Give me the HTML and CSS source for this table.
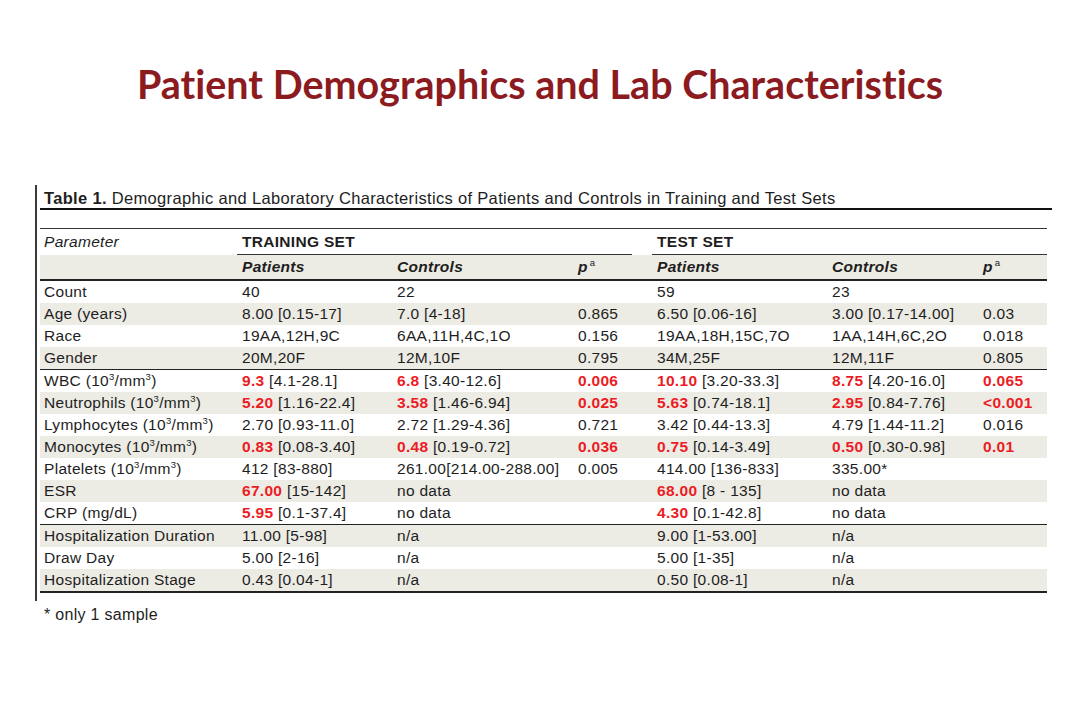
FILE: index.html
```html
<!DOCTYPE html>
<html>
<head>
<meta charset="utf-8">
<link rel="stylesheet" href="styles.css">
</head>
<body>
<div class="slide">
  <h1 class="title">Patient Demographics and Lab Characteristics</h1>
  <div class="figure">
    <div class="caption"><b>Table 1.</b> Demographic and Laboratory Characteristics of Patients and Controls in Training and Test Sets</div>
    <table class="data">
      <colgroup>
        <col class="c1"><col class="c2"><col class="c3"><col class="c4"><col class="cs"><col class="c5"><col class="c6"><col class="c7">
      </colgroup>
      <thead>
        <tr class="h1">
          <th class="param">Parameter</th>
          <th colspan="3" class="set">TRAINING SET</th>
          <th class="gap"></th>
          <th colspan="3" class="set">TEST SET</th>
        </tr>
        <tr class="h2">
          <th></th>
          <th>Patients</th><th>Controls</th><th>p<sup>a</sup></th>
          <th></th>
          <th>Patients</th><th>Controls</th><th>p<sup>a</sup></th>
        </tr>
      </thead>
      <tbody>
        <tr><td>Count</td><td>40</td><td>22</td><td></td><td></td><td>59</td><td>23</td><td></td></tr>
        <tr class="alt"><td>Age (years)</td><td>8.00 [0.15-17]</td><td>7.0 [4-18]</td><td>0.865</td><td></td><td>6.50 [0.06-16]</td><td>3.00 [0.17-14.00]</td><td>0.03</td></tr>
        <tr><td>Race</td><td>19AA,12H,9C</td><td>6AA,11H,4C,1O</td><td>0.156</td><td></td><td>19AA,18H,15C,7O</td><td>1AA,14H,6C,2O</td><td>0.018</td></tr>
        <tr class="alt sep"><td>Gender</td><td>20M,20F</td><td>12M,10F</td><td>0.795</td><td></td><td>34M,25F</td><td>12M,11F</td><td>0.805</td></tr>
        <tr><td>WBC (10<sup>3</sup>/mm<sup>3</sup>)</td><td><b class="r">9.3</b> [4.1-28.1]</td><td><b class="r">6.8</b> [3.40-12.6]</td><td><b class="r">0.006</b></td><td></td><td><b class="r">10.10</b> [3.20-33.3]</td><td><b class="r">8.75</b> [4.20-16.0]</td><td><b class="r">0.065</b></td></tr>
        <tr class="alt"><td>Neutrophils (10<sup>3</sup>/mm<sup>3</sup>)</td><td><b class="r">5.20</b> [1.16-22.4]</td><td><b class="r">3.58</b> [1.46-6.94]</td><td><b class="r">0.025</b></td><td></td><td><b class="r">5.63</b> [0.74-18.1]</td><td><b class="r">2.95</b> [0.84-7.76]</td><td><b class="r">&lt;0.001</b></td></tr>
        <tr><td>Lymphocytes (10<sup>3</sup>/mm<sup>3</sup>)</td><td>2.70 [0.93-11.0]</td><td>2.72 [1.29-4.36]</td><td>0.721</td><td></td><td>3.42 [0.44-13.3]</td><td>4.79 [1.44-11.2]</td><td>0.016</td></tr>
        <tr class="alt"><td>Monocytes (10<sup>3</sup>/mm<sup>3</sup>)</td><td><b class="r">0.83</b> [0.08-3.40]</td><td><b class="r">0.48</b> [0.19-0.72]</td><td><b class="r">0.036</b></td><td></td><td><b class="r">0.75</b> [0.14-3.49]</td><td><b class="r">0.50</b> [0.30-0.98]</td><td><b class="r">0.01</b></td></tr>
        <tr><td>Platelets (10<sup>3</sup>/mm<sup>3</sup>)</td><td>412 [83-880]</td><td>261.00[214.00-288.00]</td><td>0.005</td><td></td><td>414.00 [136-833]</td><td>335.00*</td><td></td></tr>
        <tr class="alt"><td>ESR</td><td><b class="r">67.00</b> [15-142]</td><td>no data</td><td></td><td></td><td><b class="r">68.00</b> [8 - 135]</td><td>no data</td><td></td></tr>
        <tr class="sep"><td>CRP (mg/dL)</td><td><b class="r">5.95</b> [0.1-37.4]</td><td>no data</td><td></td><td></td><td><b class="r">4.30</b> [0.1-42.8]</td><td>no data</td><td></td></tr>
        <tr class="alt"><td>Hospitalization Duration</td><td>11.00 [5-98]</td><td>n/a</td><td></td><td></td><td>9.00 [1-53.00]</td><td>n/a</td><td></td></tr>
        <tr><td>Draw Day</td><td>5.00 [2-16]</td><td>n/a</td><td></td><td></td><td>5.00 [1-35]</td><td>n/a</td><td></td></tr>
        <tr class="alt last"><td>Hospitalization Stage</td><td>0.43 [0.04-1]</td><td>n/a</td><td></td><td></td><td>0.50 [0.08-1]</td><td>n/a</td><td></td></tr>
      </tbody>
    </table>
  </div>
  <div class="footnote">* only 1 sample</div>
</div>
</body>
</html>
```
FILE: styles.css
```css
html, body {
  margin: 0;
  padding: 0;
  background: #ffffff;
}

.slide {
  width: 1080px;
  height: 720px;
  overflow: hidden;
  font-family: "Liberation Sans", Arial, sans-serif;
  color: #1e1e1e;
}

.title {
  margin: 0;
  padding-top: 61px;
  line-height: 46px;
  text-align: center;
  font-family: Lato, "Open Sans", sans-serif;
  font-weight: 700;
  font-size: 39.5px;
  font-variant-ligatures: none;
  color: #8c1b1f;
}

.figure {
  margin: 78px 0 0 35px;
  width: 1012px;
  border-left: 2px solid #3a3a3a;
  padding: 0 0 8px 3px;
}

.caption {
  font-size: 16.5px;
  letter-spacing: 0.33px;
  line-height: 20px;
  padding: 3px 0 0 4px;
  border-bottom: 2.5px solid #111;
}

.data {
  margin-top: 18px;
  width: 1007px;
  table-layout: fixed;
  border-collapse: collapse;
  font-size: 15.5px;
  letter-spacing: 0.3px;
}

.c1 { width: 197px; }
.c2 { width: 155px; }
.c3 { width: 181px; }
.c4 { width: 59px; }
.cs { width: 20px; }
.c5 { width: 175px; }
.c6 { width: 151px; }
.c7 { width: 69px; }

.data th,
.data td {
  padding: 0 0 0 5px;
  text-align: left;
  white-space: nowrap;
  vertical-align: middle;
}

.data td:first-child,
.data th:first-child {
  padding-left: 4px;
}

.h1 th {
  height: 25px;
  border-top: 1.5px solid #333;
  font-weight: 700;
}

.h1 .param {
  font-weight: 400;
  font-style: italic;
}

.h1 .set {
  border-bottom: 1.5px solid #333;
}

.h1 .gap {
  border-bottom: none;
}

.h2 th {
  height: 24px;
  background: #ecebe4;
  font-weight: 700;
  font-style: italic;
  border-bottom: 2px solid #222;
}

.h2 sup,
.data td sup {
  font-size: 9.5px;
  line-height: 0;
  vertical-align: 6px;
}

.h2 sup {
  font-style: normal;
  font-weight: 400;
  margin-left: 2px;
}

.data tbody td {
  height: 22px;
  line-height: 16px;
}

.data tbody tr.alt td {
  background: #ecebe4;
}

.data tbody tr.sep td {
  border-bottom: 1.5px solid #222;
}

.data tbody tr.last td {
  border-bottom: 2px solid #222;
}

.r {
  color: #ec1c24;
  font-weight: 700;
}

.footnote {
  margin: 4px 0 0 44px;
  font-size: 16px;
  letter-spacing: 0.3px;
  line-height: 20px;
}
```
